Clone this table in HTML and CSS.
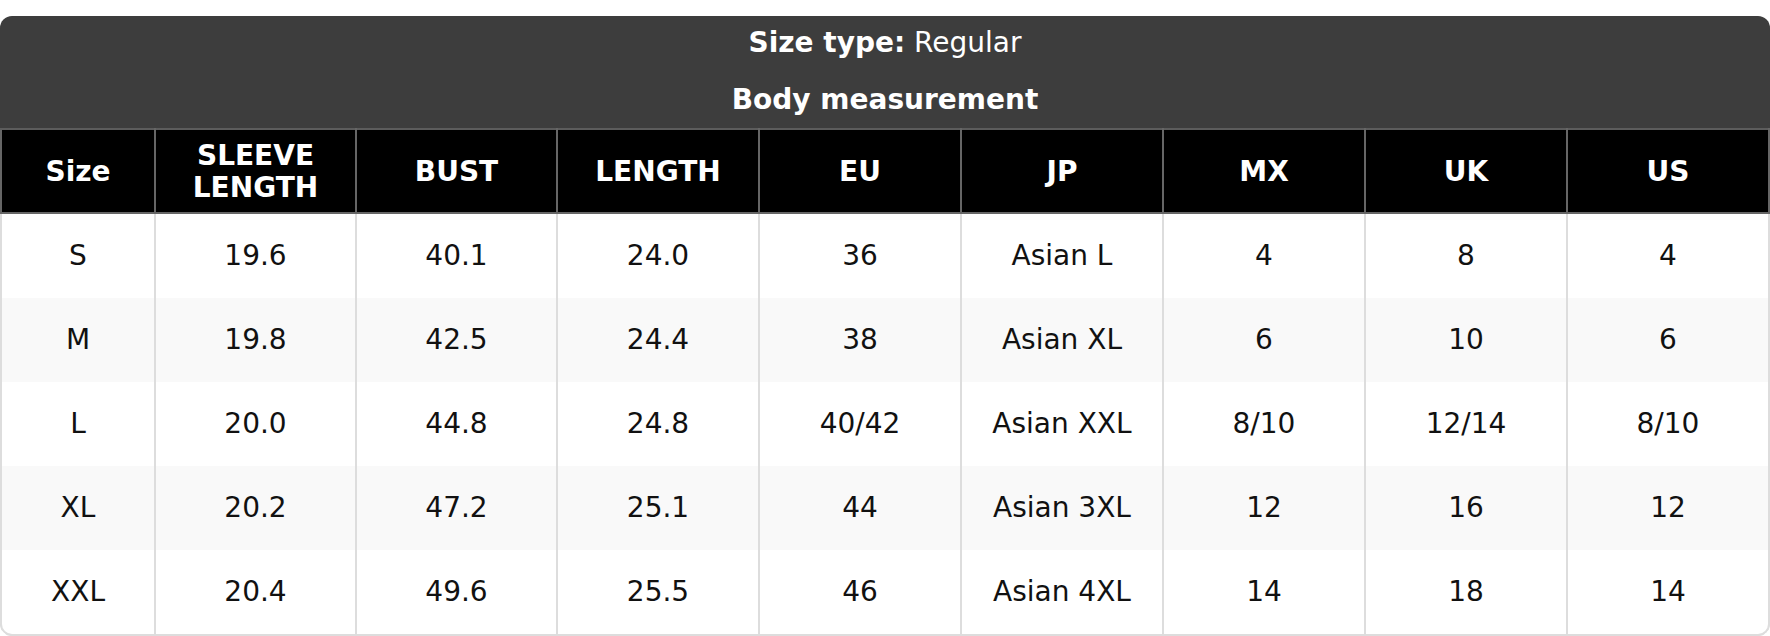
FILE: index.html
```html
<!DOCTYPE html>
<html lang="en">
<head>
<meta charset="utf-8">
<title>Size chart</title>
<link rel="stylesheet" href="styles.css">
</head>
<body>
<div class="card">
  <div class="band">
    <div class="band-line"><strong>Size type:</strong> Regular</div>
    <div class="band-line band-title">Body measurement</div>
  </div>
  <table class="chart">
    <colgroup>
      <col class="col-size">
      <col class="col-narrow"><col class="col-narrow"><col><col><col><col><col><col>
    </colgroup>
    <thead>
      <tr>
        <th>Size</th>
        <th>SLEEVE<br>LENGTH</th>
        <th>BUST</th>
        <th>LENGTH</th>
        <th>EU</th>
        <th>JP</th>
        <th>MX</th>
        <th>UK</th>
        <th>US</th>
      </tr>
    </thead>
    <tbody>
      <tr><td>S</td><td>19.6</td><td>40.1</td><td>24.0</td><td>36</td><td>Asian L</td><td>4</td><td>8</td><td>4</td></tr>
      <tr><td>M</td><td>19.8</td><td>42.5</td><td>24.4</td><td>38</td><td>Asian XL</td><td>6</td><td>10</td><td>6</td></tr>
      <tr><td>L</td><td>20.0</td><td>44.8</td><td>24.8</td><td>40/42</td><td>Asian XXL</td><td>8/10</td><td>12/14</td><td>8/10</td></tr>
      <tr><td>XL</td><td>20.2</td><td>47.2</td><td>25.1</td><td>44</td><td>Asian 3XL</td><td>12</td><td>16</td><td>12</td></tr>
      <tr><td>XXL</td><td>20.4</td><td>49.6</td><td>25.5</td><td>46</td><td>Asian 4XL</td><td>14</td><td>18</td><td>14</td></tr>
    </tbody>
  </table>
</div>
</body>
</html>
```

FILE: styles.css
```css
html, body {
  margin: 0;
  padding: 0;
  background: #ffffff;
}

body {
  padding-top: 16px;
  font-family: "DejaVu Sans", "Liberation Sans", sans-serif;
  font-size: 28px;
  line-height: 32px;
  color: #111111;
}

.card {
  position: relative;
  border-radius: 12px;
  overflow: hidden;
  background: #ffffff;
}

.card::after {
  content: "";
  position: absolute;
  left: 0;
  right: 0;
  bottom: 0;
  height: 60px;
  border: 2px solid #dddddd;
  border-top: 0;
  border-radius: 0 0 12px 12px;
  pointer-events: none;
}

.band {
  background: #3d3d3d;
  color: #ffffff;
  text-align: center;
  padding: 11px 0 12px;
}

.band-line {
  line-height: 32px;
}

.band-title {
  margin-top: 25px;
  font-weight: bold;
}

.chart {
  width: 100%;
  border-collapse: collapse;
  table-layout: fixed;
}

.col-size {
  width: 154px;
}

.col-narrow {
  width: 201px;
}

.chart th {
  background: #000000;
  color: #ffffff;
  font-weight: bold;
  text-align: center;
  vertical-align: middle;
  padding: 10px 6px 8px;
  border: 2px solid #666666;
  border-top: 2px solid #5c5c5c;
}

.chart td {
  text-align: center;
  vertical-align: middle;
  padding: 26px 6px;
  border: 2px solid #dddddd;
  border-top: 0;
  border-bottom: 0;
}

.chart tbody tr:nth-child(even) td {
  background: #f9f9f9;
}

.chart tbody tr:last-child td {
  border-bottom: 2px solid #dddddd;
}
```
